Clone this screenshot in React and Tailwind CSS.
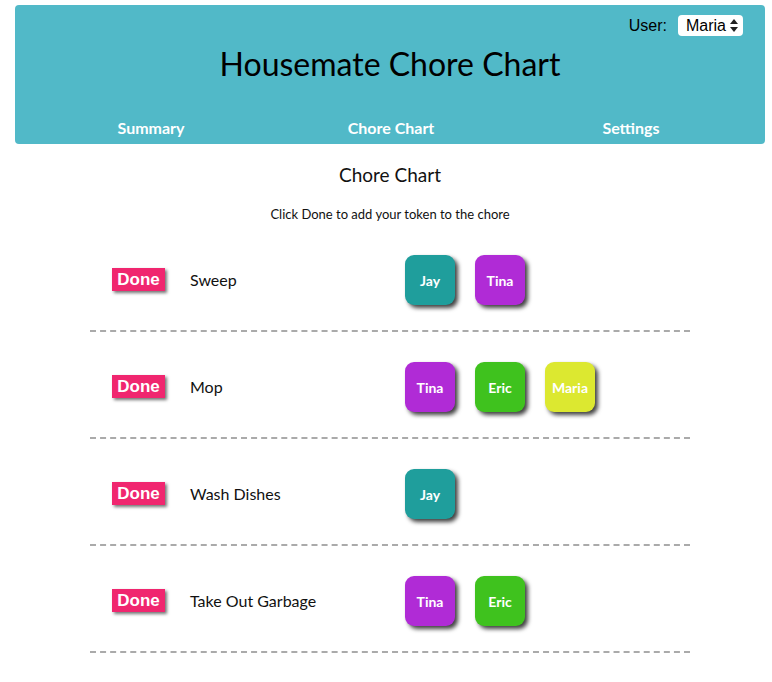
import React from 'react';

const chores = [
  { name: 'Sweep', tokens: ['Jay', 'Tina'] },
  { name: 'Mop', tokens: ['Tina', 'Eric', 'Maria'] },
  { name: 'Wash Dishes', tokens: ['Jay'] },
  { name: 'Take Out Garbage', tokens: ['Tina', 'Eric'] },
];

const tokenColors = {
  Jay: 'bg-[#1f9e9c]',
  Tina: 'bg-[#b02bd6]',
  Eric: 'bg-[#3fc21e]',
  Maria: 'bg-[#dce830]',
};

function Token({ who }) {
  return (
    <div
      className={`w-[50px] h-[50px] rounded-[9px] flex items-center justify-center text-white font-bold text-[14px] shadow-[3px_3px_4px_rgba(0,0,0,0.75)] ${tokenColors[who]}`}
    >
      {who}
    </div>
  );
}

export default function App() {
  return (
    <div className="w-[772px] min-h-[682px] bg-white font-['Lato','Open_Sans',sans-serif] text-[#111]">
      {/* Header */}
      <header className="ml-[15px] mr-[7px] mt-[5px] bg-[#51b9c8] rounded-[4px] flex flex-col pt-[10px] pb-[7px]">
        <div className="flex justify-end items-center pr-[22px] h-[21px]">
          <span className="font-['Liberation_Sans',Arial,sans-serif] text-[16px] text-black mr-[11px]">User:</span>
          <div className="w-[65px] h-[21px] bg-white rounded-[4px] flex items-center justify-between pl-[8px] pr-[5px] font-['Liberation_Sans',Arial,sans-serif] text-[16px] text-black">
            <span>Maria</span>
            <svg width="8" height="13" viewBox="0 0 8 13">
              <path d="M4 0 L8 5 H0 Z" fill="#222" />
              <path d="M4 13 L8 8 H0 Z" fill="#222" />
            </svg>
          </div>
        </div>
        <h1 className="mt-[7px] text-center text-[32px] leading-[41px] text-black">Housemate Chore Chart</h1>
        <nav className="mt-[35px] grid grid-cols-3 pl-[16px] pr-[14px] text-white font-bold text-[16px] leading-[18px]">
          <span className="text-center">Summary</span>
          <span className="text-center">Chore Chart</span>
          <span className="text-center">Settings</span>
        </nav>
      </header>

      {/* Main */}
      <main className="flex flex-col items-center pl-[8px]">
        <h2 className="mt-[20px] text-[19px] leading-[22px]">Chore Chart</h2>
        <p className="mt-[20px] text-[13px] leading-[16px]">Click Done to add your token to the chore</p>

        <div className="mt-[3px] w-[600px]">
          {chores.map((c) => (
            <div
              key={c.name}
              className="flex items-center pt-[30px] pb-[25px] pl-[22px] border-b-2 border-dashed border-[#aaaaaa]"
            >
              <button className="w-[53px] h-[23px] mb-[2px] bg-[#f0266f] text-white font-bold text-[17px] leading-[23px] font-['Liberation_Sans',Arial,sans-serif] shadow-[2px_2px_3px_rgba(0,0,0,0.55)] flex items-center justify-center">
                Done
              </button>
              <span className="ml-[25px] w-[215px] text-[16px]">{c.name}</span>
              <div className="flex gap-[20px]">
                {c.tokens.map((t) => (
                  <Token key={t} who={t} />
                ))}
              </div>
            </div>
          ))}
        </div>
      </main>
    </div>
  );
}
